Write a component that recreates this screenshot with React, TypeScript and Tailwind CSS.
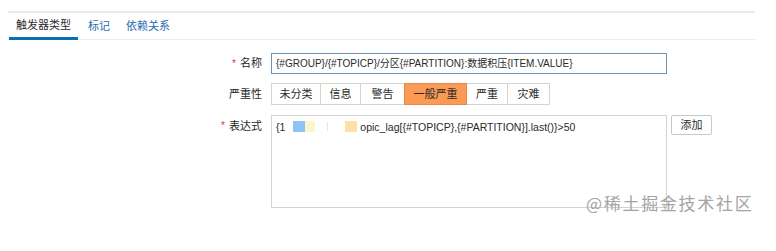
import React from "react";

const font = { fontFamily: '"Liberation Sans", Arial, "Noto Sans CJK SC", sans-serif' };

function Label({ text, required }: { text: string; required?: boolean }) {
  return (
    <div className="w-[262px] shrink-0 flex justify-end items-center text-[11px] text-[#1f1f1f]">
      {required && <span className="text-[#e33734] mr-[4px] text-[10px]">*</span>}
      <span>{text}</span>
    </div>
  );
}

const sev = ["未分类", "信息", "警告", "一般严重", "严重", "灾难"];
const sevW = [50, 41, 45, 63, 42, 43];

export default function App() {
  return (
    <div className="relative w-[776px] h-[251px] bg-white overflow-hidden" style={font}>
      <div className="ml-[8px] mt-[11px] w-[747px] border-t-2 border-[#e9e9e9]">
        <div className="flex h-[27px] border-b border-[#ececec] text-[11px]">
          <div className="w-[69px] ml-[1px] flex items-center justify-center text-[#2b2b2b] border-b-[3px] border-[#0a6fb0] mb-[-1px]">
            触发器类型
          </div>
          <div className="ml-[10px] flex items-center text-[#1f6bb0]">标记</div>
          <div className="ml-[16px] flex items-center text-[#1f6bb0]">依赖关系</div>
        </div>
      </div>

      <div className="mt-[13px] flex flex-col">
        <div className="flex h-[21px]">
          <Label text="名称" required />
          <div className="ml-[9px] w-[396px] h-[21px] border border-[#6b93b8] flex items-center px-[4px] text-[10px] text-[#2a2a2a]">
            {"{#GROUP}/{#TOPICP}/分区{#PARTITION}:数据积压{ITEM.VALUE}"}
          </div>
        </div>

        <div className="flex h-[22px] mt-[9px]">
          <Label text="严重性" />
          <div className="ml-[9px] flex">
            {sev.map((s, i) => (
              <div
                key={s}
                style={{ width: sevW[i], marginLeft: i === 0 ? 0 : -1 }}
                className={
                  i === 3
                    ? "relative z-10 h-[22px] flex items-center justify-center text-[11px] text-[#2a2a2a] bg-[#fb9a55] border border-[#e88a45]"
                    : "h-[22px] flex items-center justify-center text-[11px] text-[#2a2a2a] bg-white border border-[#d4d4d4]"
                }
              >
                {s}
              </div>
            ))}
          </div>
        </div>

        <div className="flex mt-[10px]">
          <div className="w-[262px] shrink-0 flex justify-end items-start pt-[3px] text-[11px] text-[#1f1f1f]">
            <span className="text-[#e33734] mr-[4px] text-[10px]">*</span>
            <span>表达式</span>
          </div>
          <div className="ml-[9px] w-[396px] h-[93px] border border-[#d2d2d2] px-[4px] pt-[4px] text-[10.5px] text-[#2a2a2a] flex items-start">
            <span>{"{1"}</span>
            <span className="inline-block w-[12px] h-[11px] bg-[#8fc3f5] ml-[8px] mt-[1px]" />
            <span className="inline-block w-[10px] h-[11px] bg-[#fbf6cc] mt-[1px]" />
            <span className="inline-block w-[1px] h-[9px] bg-[#e6e6e6] ml-[12px] mt-[2px]" />
            <span className="inline-block w-[12px] h-[11px] bg-[#fde0a8] ml-[17px] mt-[1px]" />
            <span className="ml-[3px]">{"opic_lag[{#TOPICP},{#PARTITION}].last()}>50"}</span>
          </div>
          <div className="ml-[4px] w-[41px] h-[20px] border border-[#c8c8c8] rounded-[2px] flex items-center justify-center text-[11px] text-[#2a2a2a]">
            添加
          </div>
        </div>
      </div>

      <div
        className="absolute left-[586px] top-[192px] text-[17px] text-[#a4a4a4] leading-[22px] tracking-[1.7px]"
        style={{ fontFamily: '"Noto Sans CJK SC", sans-serif' }}
      >
        @稀土掘金技术社区
      </div>
    </div>
  );
}
